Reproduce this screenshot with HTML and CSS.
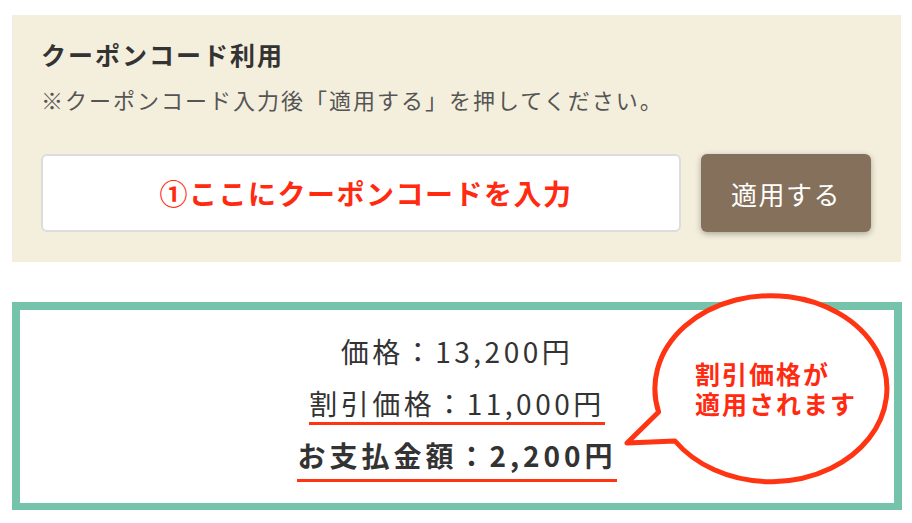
FILE: index.html
```html
<!DOCTYPE html>
<html lang="ja">
<head>
    <meta charset="UTF-8">
    <meta name="viewport" content="width=device-width, initial-scale=1.0">
    <title>クーポンコード利用</title>
    <link rel="stylesheet" href="styles.css">
</head>
<body>
    <div class="coupon">
        <h2 class="coupon-title">クーポンコード利用</h2>
        <p class="coupon-note">※クーポンコード入力後「適用する」を押してください。</p>
        <form class="coupon-form">
            <div class="coupon-input">①ここにクーポンコードを入力</div>
            <button type="button" class="coupon-btn">適用する</button>
        </form>
    </div>
    <div class="price-box">
        <div class="price-row">価格：13,200円</div>
        <div class="price-row"><span class="mark">割引価格：11,000円</span></div>
        <div class="price-row total"><span class="mark">お支払金額：2,200円</span></div>
        <svg class="bubble" width="280" height="200" viewBox="620 290 280 200">
            <path d="M658.6 413 L627 444 L675 442 A116 93 0 1 0 658.6 413 Z" fill="#ffffff" stroke="#ff3412" stroke-width="5" stroke-linejoin="round"/>
        </svg>
        <div class="bubble-text">割引価格が<br>適用されます</div>
    </div>
</body>
</html>
```

FILE: styles.css
```css
body {
    margin: 0;
    background-color: #ffffff;
    font-family: "Noto Sans CJK JP", "Noto Sans", sans-serif;
    color: #333333;
}
.coupon {
    background-color: #f4efdc;
    margin: 15px 11px 0 12px;
    padding: 22px 30px 30px 29px;
}
.coupon-title {
    margin: 0;
    font-size: 25px;
    line-height: 34px;
    letter-spacing: 2px;
    font-weight: bold;
    color: #333333;
}
.coupon-note {
    margin: 13px 0 0 0;
    font-size: 22px;
    line-height: 30px;
    letter-spacing: 2px;
    color: #555555;
}
.coupon-form {
    display: flex;
    gap: 20px;
    margin-top: 40px;
}
.coupon-input {
    width: 626px;
    height: 74px;
    padding-left: 10px;
    background-color: #ffffff;
    border: 2px solid #dcdcdc;
    border-radius: 6px;
    display: flex;
    align-items: center;
    justify-content: center;
    font-size: 28px;
    font-weight: bold;
    letter-spacing: 1.5px;
    color: #ff2a10;
}
.coupon-btn {
    width: 170px;
    height: 78px;
    background-color: #85705b;
    border: none;
    border-radius: 6px;
    box-shadow: 0 2px 6px rgba(0, 0, 0, 0.3);
    color: #ffffff;
    font-family: inherit;
    font-size: 26px;
    letter-spacing: 1.5px;
    cursor: pointer;
}
.price-box {
    position: relative;
    margin: 40px 10px 0 12px;
    border: 8px solid #76c3ab;
    border-bottom-width: 7px;
    padding: 15px 0 21px 0;
    display: flex;
    flex-direction: column;
    align-items: center;
}
.price-row {
    font-size: 28px;
    line-height: 52px;
    letter-spacing: 3.5px;
}
.price-row .mark {
    display: inline-block;
    line-height: 38px;
    border-bottom: 3px solid #ff3412;
}
.price-row.total {
    font-weight: bold;
    letter-spacing: 4px;
}
.price-row.total .mark {
    padding-bottom: 5px;
}
.bubble {
    position: absolute;
    left: 600px;
    top: -21px;
}
.bubble-text {
    position: absolute;
    left: 675px;
    top: 48px;
    text-align: left;
    font-size: 25px;
    line-height: 30px;
    letter-spacing: 2px;
    font-weight: bold;
    color: #ff2a10;
}
```
